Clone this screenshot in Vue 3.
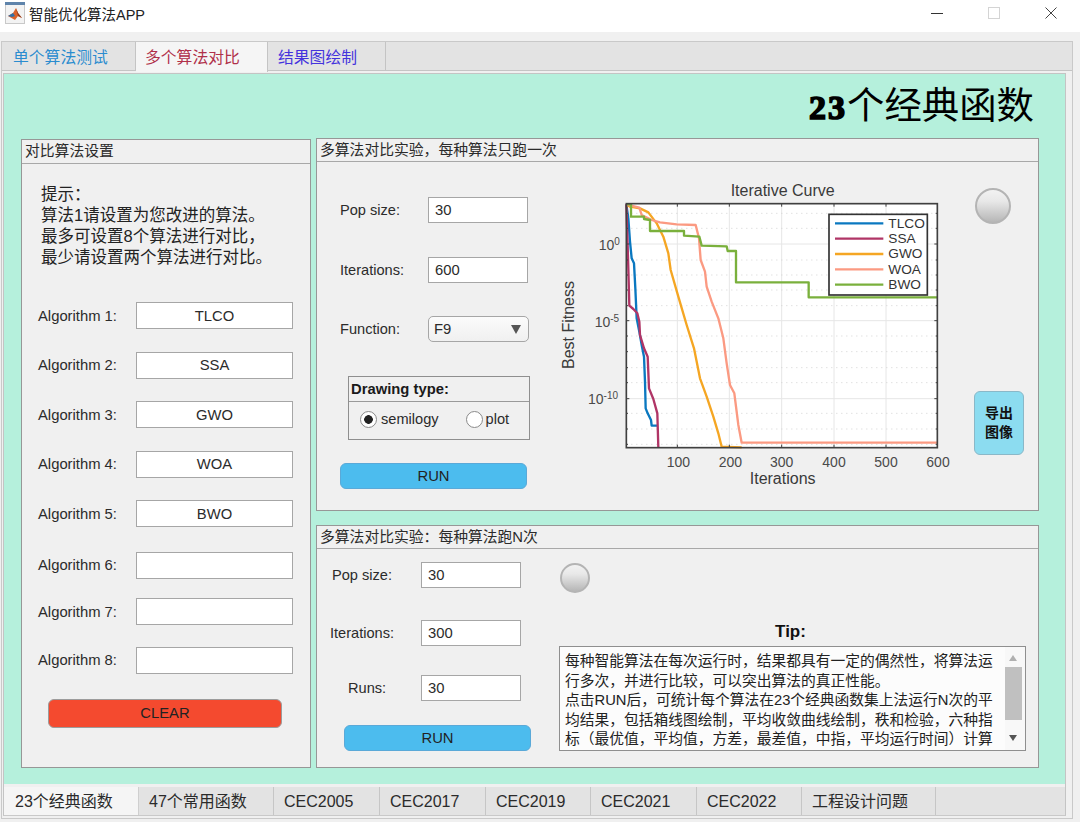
<template>
  <div class="window">
    <div class="titlebar">
      <svg class="app-icon" width="20" height="22" viewBox="0 0 20 22">
        <rect x="0.5" y="0.5" width="19" height="21" fill="#f3f3f3" stroke="#c9c9c9" />
        <rect x="0" y="0" width="20" height="3" fill="#5f84ab" />
        <path d="M3 14 L8 11 L11 6 L13 11 L17 16 L13 14 L10 18 Z" fill="#d9622b" />
        <path d="M3 14 L8 11 L10 14 L7 15 Z" fill="#2f6fa8" />
        <path d="M11 6 L13 11 L17 16 L13 14 Z" fill="#8c3b1e" />
      </svg>
      <span class="app-title">智能优化算法APP</span>
      <div class="win-btns">
        <svg width="12" height="12" viewBox="0 0 12 12"><path d="M0 6.5H12" stroke="#333" stroke-width="1" /></svg>
        <svg width="12" height="12" viewBox="0 0 12 12"><rect x="0.5" y="0.5" width="11" height="11" fill="none" stroke="#d4d4d4" /></svg>
        <svg width="12" height="12" viewBox="0 0 12 12"><path d="M0.5 0.5L11.5 11.5M11.5 0.5L0.5 11.5" stroke="#444" stroke-width="1" /></svg>
      </div>
    </div>

    <div class="outer">
      <div class="top-tabs">
        <div v-for="t in topTabs" :key="t.name" class="top-tab" :class="[t.cls, { active: t.active }]">{{ t.name }}</div>
      </div>

      <div class="inner">
        <div class="mint">
          <div class="heading"><span class="heading-num">23</span>个经典函数</div>

          <div class="panels">
            <section class="panel left-panel">
              <div class="panel-head left-head">对比算法设置</div>
              <div class="hint">
                提示&#65306;<br />
                算法1请设置为您改进的算法。<br />
                最多可设置8个算法进行对比&#65292;<br />
                最少请设置两个算法进行对比。
              </div>
              <div class="algo-list">
                <div v-for="(a, i) in algos" :key="i" class="algo-row">
                  <label class="algo-label">Algorithm {{ i + 1 }}:</label>
                  <input class="box center" :value="a" readonly />
                </div>
              </div>
              <button class="btn clear-btn">CLEAR</button>
            </section>

            <div class="right-col">
              <section class="panel upper">
                <div class="panel-head">多算法对比实验&#65292;每种算法只跑一次</div>
                <div class="upper-body">
                  <div class="upper-form">
                    <div class="form-row">
                      <label>Pop size:</label>
                      <input class="box" value="30" readonly />
                    </div>
                    <div class="form-row">
                      <label>Iterations:</label>
                      <input class="box" value="600" readonly />
                    </div>
                    <div class="form-row">
                      <label>Function:</label>
                      <div class="select">F9<span class="caret"></span></div>
                    </div>
                    <div class="group">
                      <div class="group-head">Drawing type:</div>
                      <div class="group-body">
                        <span class="radio on"></span><span class="radio-text">semilogy</span>
                        <span class="radio second"></span><span class="radio-text">plot</span>
                      </div>
                    </div>
                    <button class="btn run-btn">RUN</button>
                  </div>

                  <svg class="chart" width="420" height="320" viewBox="0 0 1260 960">
                    <rect x="229" y="86" width="933" height="732" fill="#fff" />
                    <g stroke="#e6e6e6" stroke-width="3">
                      <path v-for="x in gridX" :key="x" :d="`M${x} 86V818`" />
                      <path v-for="y in gridY" :key="y" :d="`M229 ${y}H1162`" />
                    </g>
                    <g stroke="#d2d2d2" stroke-width="3" stroke-dasharray="3 12">
                      <path v-for="y in minorY" :key="y" :d="`M229 ${y}H1162`" />
                    </g>
                    <g fill="none" stroke-width="7" stroke-linejoin="round">
                      <polyline v-for="c in curves" :key="c.name" :points="c.points" :stroke="c.color" />
                    </g>
                    <g stroke="#404040" stroke-width="3">
                      <path v-for="x in gridX" :key="'t' + x" :d="`M${x} 86v9M${x} 818v-9`" />
                      <path v-for="y in gridY" :key="'l' + y" :d="`M229 ${y}h9M1162 ${y}h-9`" />
                      <path v-for="y in minorY" :key="'m' + y" :d="`M229 ${y}h5M1162 ${y}h-5`" />
                    </g>
                    <rect x="229" y="86" width="933" height="732" fill="none" stroke="#404040" stroke-width="5" />

                    <rect x="837" y="118" width="295" height="242" fill="#fff" stroke="#333" stroke-width="5" />
                    <g v-for="(c, i) in curves" :key="'lg' + c.name">
                      <path :d="`M855 ${145 + i * 46}H1000`" :stroke="c.color" stroke-width="7" />
                      <text x="1015" :y="158 + i * 46" class="legend-text">{{ c.name }}</text>
                    </g>

                    <text x="698" y="64" text-anchor="middle" class="ax-title">Iterative Curve</text>
                    <text x="698" y="927" text-anchor="middle" class="ax-title">Iterations</text>
                    <text transform="translate(72 450) rotate(-90)" text-anchor="middle" class="ax-title">Best Fitness</text>
                    <text v-for="(x, i) in gridLabels" :key="x" :x="x" y="875" text-anchor="middle" class="tick">{{ (i + 1) * 100 }}</text>
                    <text x="146" y="225" class="tick">10<tspan class="tick-exp" dy="-15">0</tspan></text>
                    <text x="134" y="456" class="tick">10<tspan class="tick-exp" dy="-15">-5</tspan></text>
                    <text x="114" y="686" class="tick">10<tspan class="tick-exp" dy="-15">-10</tspan></text>
                  </svg>

                  <div class="side">
                    <div class="lamp big"></div>
                    <button class="btn export-btn">导出<br />图像</button>
                  </div>
                </div>
              </section>

              <section class="panel lower">
                <div class="panel-head">多算法对比实验&#65306;每种算法跑N次</div>
                <div class="lower-body">
                  <div class="lower-form">
                    <div class="lower-row">
                      <label class="lb-pop">Pop size:</label>
                      <input class="box" value="30" readonly />
                    </div>
                    <div class="lower-row">
                      <label class="lb-iter">Iterations:</label>
                      <input class="box" value="300" readonly />
                    </div>
                    <div class="lower-row">
                      <label class="lb-runs">Runs:</label>
                      <input class="box" value="30" readonly />
                    </div>
                    <button class="btn run-btn run-two">RUN</button>
                  </div>
                  <div class="tip-col">
                    <div class="lamp small"></div>
                    <div class="tip-title">Tip:</div>
                    <div class="tip-box">
                      <div class="tip-text">
                        <p>每种智能算法在每次运行时&#65292;结果都具有一定的偶然性&#65292;将算法运行多次&#65292;并进行比较&#65292;可以突出算法的真正性能。</p>
                        <p>点击RUN后&#65292;可统计每个算法在23个经典函数集上法运行N次的平均结果&#65292;包括箱线图绘制&#65292;平均收敛曲线绘制&#65292;秩和检验&#65292;六种指标&#65288;最优值&#65292;平均值&#65292;方差&#65292;最差值&#65292;中指&#65292;平均运行时间&#65289;计算</p>
                      </div>
                      <div class="scroll">
                        <span class="arrow up"></span>
                        <span class="thumb"></span>
                        <span class="arrow down"></span>
                      </div>
                    </div>
                  </div>
                </div>
              </section>
            </div>
          </div>
        </div>

        <div class="bottom-tabs">
          <div v-for="(t, i) in bottomTabs" :key="t.name" class="bottom-tab" :class="{ active: i === 0 }" :style="{ width: t.w + 'px' }">{{ t.name }}</div>
        </div>
      </div>
    </div>
  </div>
</template>

<script setup>
const topTabs = [
  { name: '单个算法测试', cls: 'tab-blue' },
  { name: '多个算法对比', cls: 'tab-red', active: true },
  { name: '结果图绘制', cls: 'tab-violet' },
]

const algos = ['TLCO', 'SSA', 'GWO', 'WOA', 'BWO', '', '', '']

const bottomTabs = [
  { name: '23个经典函数', w: 135 },
  { name: '47个常用函数', w: 135 },
  { name: 'CEC2005', w: 106 },
  { name: 'CEC2017', w: 106 },
  { name: 'CEC2019', w: 105 },
  { name: 'CEC2021', w: 106 },
  { name: 'CEC2022', w: 105 },
  { name: '工程设计问题', w: 134 },
]

// chart coordinates are 3x page pixels
const gridX = [382, 538, 695, 852, 1008]
const gridLabels = [385, 541, 695, 852, 1008, 1164]
const gridY = [207, 437, 671]
const minorY = [115, 160, 255, 300, 345, 392, 483, 530, 578, 623, 715, 762, 808]

const curves = [
  { name: 'TLCO', color: '#0a78c0', points: '229,88 235,130 240,200 245,250 252,265 256,340 260,430 268,470 275,510 282,545 285,620 287,700 293,715 303,735 305,752 322,752' },
  { name: 'SSA', color: '#b03566', points: '229,88 232,180 235,280 238,392 250,402 262,415 268,440 270,480 282,520 293,545 297,640 310,672 322,715 325,818' },
  { name: 'GWO', color: '#f5a623', points: '229,88 240,95 270,100 295,112 320,145 340,185 355,235 362,285 385,365 410,450 432,520 450,610 470,665 490,725 505,775 515,815 575,817' },
  { name: 'WOA', color: '#fb9a82', points: '229,88 268,98 275,120 305,135 330,142 380,148 437,150 447,190 452,255 465,290 470,335 485,380 505,430 520,490 530,565 540,630 553,655 565,750 575,803 1162,803' },
  { name: 'BWO', color: '#7ab03c', points: '229,88 243,88 243,125 282,125 282,132 300,135 300,168 402,168 402,182 448,185 455,212 530,214 533,228 558,228 558,322 776,322 776,367 1162,367' },
]
</script>

<style>
html, body {
  margin: 0;
  background: #f0f0f0;
}
</style>

<style scoped>
.window {
  width: 1080px;
  height: 822px;
  display: flex;
  flex-direction: column;
  background: #f0f0f0;
  font-family: "Liberation Sans", "Noto Sans CJK SC", sans-serif;
  color: #2b2b2b;
  overflow: hidden;
}

.titlebar {
  height: 32px;
  flex: none;
  display: flex;
  align-items: center;
  background: #fff;
  padding: 0 23px 6px 5px;
  box-sizing: border-box;
}

.app-icon {
  margin-right: 4px;
}

.app-title {
  font-size: 14.5px;
  color: #222;
}

.win-btns {
  margin-left: auto;
  display: flex;
  gap: 45px;
}

.outer {
  flex: 1;
  margin: 9px 7px 3px 1px;
  border: 1px solid #c9c9c9;
  display: flex;
  flex-direction: column;
  min-height: 0;
}

.top-tabs {
  height: 28px;
  flex: none;
  display: flex;
  background: #e3e3e3;
  border-bottom: 1px solid #c4c4c4;
}

.top-tab {
  box-sizing: border-box;
  height: 29px;
  font-size: 15.8px;
  line-height: 31px;
  border-right: 1px solid #c4c4c4;
}

.top-tab:nth-child(1) { width: 134px; padding-left: 11px; }
.top-tab:nth-child(2) { width: 132px; padding-left: 9px; }
.top-tab:nth-child(3) { width: 118px; padding-left: 10px; }

.top-tab.active {
  background: #f5f5f5;
  height: 30px;
  position: relative;
  z-index: 1;
}

.tab-blue { color: #2a8ccf; }
.tab-red { color: #b0304a; }
.tab-violet { color: #4433dd; }

.inner {
  flex: 1;
  margin: 2px 6px 2px 1px;
  border: 1px solid #c4c4c4;
  border-bottom-color: #c9c9c9;
  display: flex;
  flex-direction: column;
  min-height: 0;
}

.mint {
  flex: 1;
  background: #b5f0dc;
  min-height: 0;
}

.heading {
  height: 64px;
  line-height: 65px;
  padding-right: 31px;
  text-align: right;
  font-size: 37.4px;
  color: #000;
}

.heading-num {
  font-family: "Liberation Serif", serif;
  font-weight: 700;
  font-size: 34px;
  letter-spacing: 2px;
  -webkit-text-stroke: 1.6px #000;
}

.panels {
  display: flex;
  gap: 5px;
  padding-left: 17px;
}

.panel {
  box-sizing: border-box;
  background: #f0f0f0;
  border: 1px solid #979797;
}

.panel-head {
  box-sizing: border-box;
  height: 23px;
  line-height: 23px;
  padding-left: 3px;
  font-size: 14.8px;
  border-bottom: 1px solid #a8a8a8;
  white-space: nowrap;
}

.left-panel {
  width: 290px;
  height: 629px;
  margin-top: 1px;
}

.left-head {
  height: 24px;
  line-height: 23px;
}

.hint {
  padding: 20px 0 0 19px;
  font-size: 16.5px;
  line-height: 21px;
  color: #222;
}

.algo-list {
  margin-top: 34px;
  padding-left: 16px;
  display: flex;
  flex-direction: column;
  gap: 22.5px;
}

.algo-row {
  display: flex;
  align-items: center;
  height: 27px;
}

.algo-row:nth-child(6) { margin-top: 2px; }
.algo-row:nth-child(7) { margin-top: -3px; }
.algo-row:nth-child(8) { margin-top: -1px; }

.algo-label {
  width: 98px;
  flex: none;
  font-size: 14.8px;
}

.box {
  box-sizing: border-box;
  display: block;
  width: 100px;
  height: 26px;
  padding: 0 6px;
  background: #fff;
  border: 1px solid #a6a6a6;
  border-radius: 0;
  outline: none;
  font-family: inherit;
  font-size: 14.8px;
  color: #2b2b2b;
}

.algo-row .box {
  width: 157px;
  height: 27px;
}

.center {
  text-align: center;
}

.btn {
  box-sizing: border-box;
  display: block;
  padding: 0;
  border: 1px solid #9c9c9c;
  border-radius: 6px;
  font-family: inherit;
  font-size: 14.8px;
  color: #222;
}

.clear-btn {
  width: 234px;
  height: 29px;
  margin: 25px 0 0 26px;
  background: #f44a2f;
}

.right-col {
  width: 723px;
  display: flex;
  flex-direction: column;
  gap: 14px;
}

.upper {
  height: 373px;
}

.upper-body {
  display: flex;
}

.upper-form {
  width: 233px;
  flex: none;
  box-sizing: border-box;
  padding: 35px 0 0 23px;
}

.form-row {
  display: flex;
  align-items: center;
  height: 26px;
  margin-bottom: 33.5px;
}

.form-row label {
  width: 88px;
  flex: none;
  font-size: 14.6px;
}

.select {
  box-sizing: border-box;
  width: 101px;
  height: 26px;
  line-height: 24px;
  padding-left: 5px;
  background: linear-gradient(#fbfbfb, #f0f0f0);
  border: 1px solid #a6a6a6;
  border-radius: 5px;
  font-size: 14.8px;
  display: flex;
  align-items: center;
  justify-content: space-between;
}

.caret {
  width: 0;
  height: 0;
  margin-right: 7px;
  border-left: 5px solid transparent;
  border-right: 5px solid transparent;
  border-top: 9px solid #555;
}

.group {
  box-sizing: border-box;
  width: 182px;
  height: 64px;
  margin: 34px 0 23px 8px;
  border: 1px solid #8f8f8f;
}

.group-head {
  box-sizing: border-box;
  height: 25px;
  line-height: 24px;
  padding-left: 2px;
  font-size: 14.8px;
  font-weight: 700;
  color: #1a1a1a;
  border-bottom: 1px solid #9a9a9a;
}

.group-body {
  display: flex;
  align-items: center;
  height: 34px;
  padding-left: 11px;
  font-size: 14.6px;
}

.radio {
  box-sizing: border-box;
  width: 17px;
  height: 17px;
  flex: none;
  border: 1px solid #8a8a8a;
  border-radius: 50%;
  background: #fff;
  margin-right: 4px;
}

.radio.on {
  background: radial-gradient(circle, #222 0 4px, #fff 4.6px);
}

.radio.second {
  margin-left: 27px;
  margin-right: 3px;
}

.run-btn {
  width: 187px;
  height: 26px;
  background: #4cbcee;
  border-color: #5aa9d8;
}

.chart {
  flex: none;
  margin-top: 13px;
  display: block;
}

.chart text {
  font-family: "Liberation Sans", sans-serif;
}

.ax-title {
  font-size: 48px;
  fill: #3a3a3a;
}

.tick {
  font-size: 42px;
  fill: #4a4a4a;
}

.tick-exp {
  font-size: 30px;
}

.legend-text {
  font-size: 41px;
  fill: #333;
}

.side {
  flex: none;
  padding: 26px 0 0 4px;
}

.lamp {
  box-sizing: border-box;
  border-radius: 50%;
  border: 2px solid #b4b4b4;
  background: linear-gradient(#f2f2f2, #e8e8e8 35%, #b6b6b6);
}

.lamp.big {
  width: 36px;
  height: 36px;
  margin-left: 1px;
}

.lamp.small {
  width: 30px;
  height: 30px;
  margin-left: 1px;
}

.export-btn {
  width: 50px;
  height: 64px;
  margin-top: 167px;
  background: #8cdcf0;
  border-color: #8ab8c8;
  font-size: 14px;
  font-weight: 700;
  line-height: 19px;
  color: #111;
}

.lower {
  height: 243px;
}

.lower-body {
  display: flex;
}

.lower-form {
  width: 242px;
  flex: none;
  box-sizing: border-box;
  padding-top: 13px;
}

.lower-row {
  display: flex;
  align-items: center;
  height: 26px;
  padding-left: 104px;
  position: relative;
}

.lower-row:nth-child(1) { margin-bottom: 32px; }
.lower-row:nth-child(2) { margin-bottom: 29px; }
.lower-row:nth-child(3) { margin-bottom: 24px; }

.lower-row label {
  position: absolute;
  font-size: 14.6px;
}

.lb-pop { left: 15px; }
.lb-iter { left: 13px; }
.lb-runs { left: 31px; }

.run-two {
  margin-left: 27px;
}

.tip-col {
  flex: 1;
  padding-top: 14px;
}

.tip-title {
  width: 463px;
  margin-top: 27px;
  height: 26px;
  line-height: 24px;
  text-align: center;
  font-size: 17px;
  font-weight: 700;
  color: #111;
}

.tip-box {
  box-sizing: border-box;
  width: 467px;
  height: 105px;
  display: flex;
  background: #fcfcfc;
  border: 1px solid #8f8f8f;
}

.tip-text {
  flex: 1;
  overflow: hidden;
  padding: 5px 0 0 5px;
  font-size: 14.76px;
  line-height: 19.5px;
  color: #222;
}

.tip-text p {
  margin: 0;
}

.scroll {
  width: 20px;
  flex: none;
  position: relative;
  background: #f8f8f8;
}

.thumb {
  position: absolute;
  top: 20px;
  left: 0;
  width: 17px;
  height: 53px;
  background: #c0c0c0;
}

.arrow {
  position: absolute;
  left: 4px;
  width: 0;
  height: 0;
  border-left: 4px solid transparent;
  border-right: 4px solid transparent;
}

.arrow.up {
  top: 8px;
  border-bottom: 6px solid #b0b0b0;
}

.arrow.down {
  bottom: 9px;
  border-top: 6px solid #555;
}

.bottom-tabs {
  height: 28px;
  box-sizing: border-box;
  flex: none;
  margin-top: 3px;
  display: flex;
  background: #e3e3e3;
}

.bottom-tab {
  box-sizing: border-box;
  flex: none;
  padding-left: 10px;
  font-size: 16px;
  line-height: 29px;
  white-space: nowrap;
  border-right: 1px solid #c6c6c6;
}

.bottom-tab.active {
  background: #f5f5f5;
  padding-left: 11px;
  border-right: 1px solid #cfcfcf;
}
</style>
